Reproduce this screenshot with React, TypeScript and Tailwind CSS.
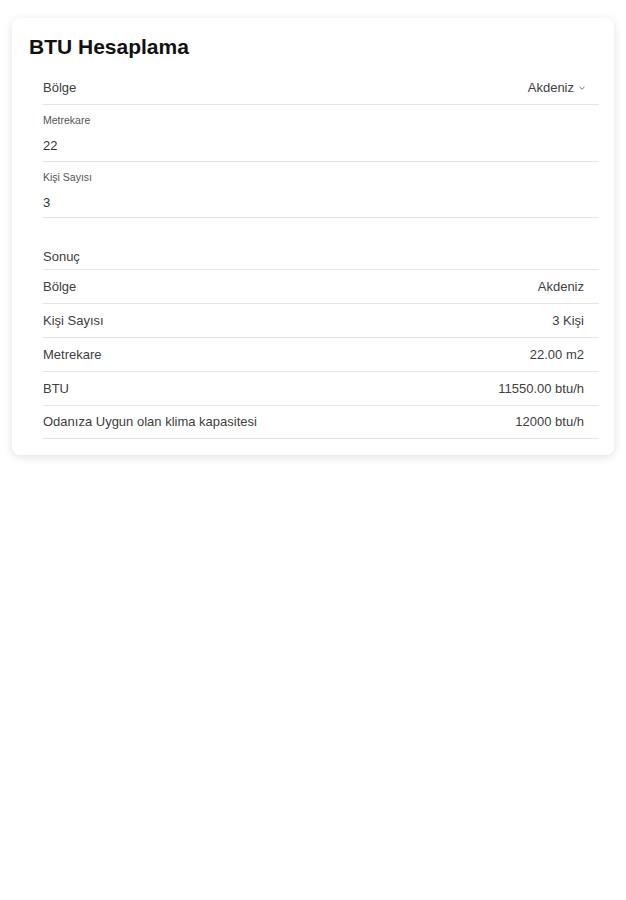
import React from "react";

const font = { fontFamily: '"Liberation Sans", Arial, sans-serif' };

function ResultRow({ label, value, last }: { label: string; value: string; last?: boolean }) {
  return (
    <div
      className={
        "flex items-center justify-between border-b border-[#e6e6e6] pr-[15px] text-[13px] leading-[16px] text-[#404040] " +
        (last ? "h-[33px]" : "h-[34px]")
      }
    >
      <span>{label}</span>
      <span>{value}</span>
    </div>
  );
}

function InputRow({ label, value }: { label: string; value: string }) {
  return (
    <div className="flex flex-col border-b border-[#e6e6e6] pt-[9px] pb-[7px]">
      <span className="text-[10.5px] leading-[12px] text-[#555]">{label}</span>
      <span className="mt-[12px] text-[13px] leading-[16px] text-[#333]">{value}</span>
    </div>
  );
}

export default function App() {
  return (
    <div className="min-h-[900px] w-full bg-white" style={font}>
      <div className="mx-[12px] mt-[18px] rounded-[8px] bg-white pt-[16px] pb-[16px] shadow-[0_2px_10px_rgba(0,0,0,0.12)]">
        <h1 className="pl-[17px] text-[21px] font-bold leading-[26px] text-[#111]">BTU Hesaplama</h1>
        <div className="ml-[31px] mr-[15px]">
          <div className="flex items-center justify-between border-b border-[#e6e6e6] pt-[20px] pb-[8px] pr-[14px] text-[13px] leading-[16px] text-[#404040]">
            <span>Bölge</span>
            <span className="flex items-center gap-[5px]">
              Akdeniz
              <svg width="6" height="4" viewBox="0 0 6 4">
                <path d="M0.5 0.8 L3 3.2 L5.5 0.8" fill="none" stroke="#777" strokeWidth="1" />
              </svg>
            </span>
          </div>
          <InputRow label="Metrekare" value="22" />
          <div className="flex flex-col border-b border-[#e6e6e6] pt-[9px] pb-[6px]">
            <span className="text-[10.5px] leading-[12px] text-[#555]">Kişi Sayısı</span>
            <span className="mt-[12px] text-[13px] leading-[16px] text-[#333]">3</span>
          </div>
          <div className="border-b border-[#e6e6e6] pt-[31px] pb-[4px] text-[13px] leading-[16px] text-[#404040]">
            Sonuç
          </div>
          <ResultRow label="Bölge" value="Akdeniz" />
          <ResultRow label="Kişi Sayısı" value="3 Kişi" />
          <ResultRow label="Metrekare" value="22.00 m2" />
          <ResultRow label="BTU" value="11550.00 btu/h" />
          <ResultRow label="Odanıza Uygun olan klima kapasitesi" value="12000 btu/h" last />
        </div>
      </div>
    </div>
  );
}
